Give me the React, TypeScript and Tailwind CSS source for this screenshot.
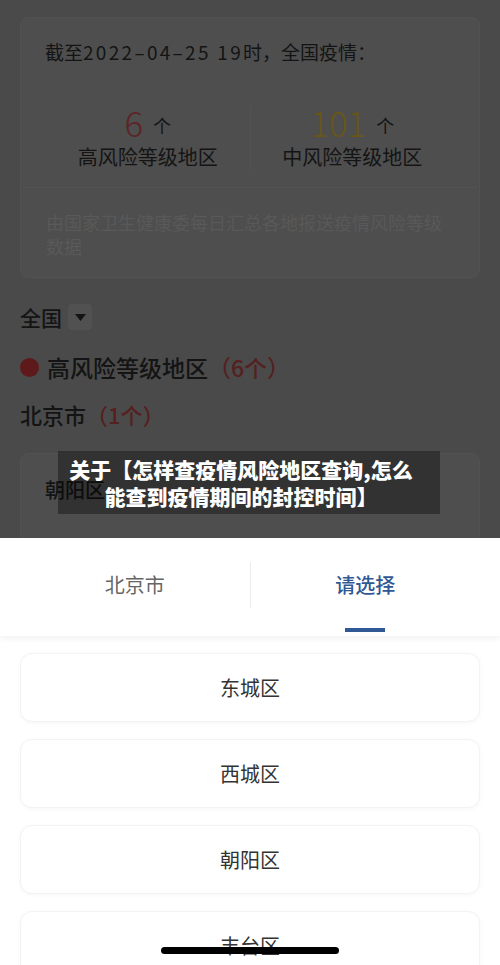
const districts = ["东城区", "西城区", "朝阳区", "丰台区"];

export default function App() {
  return (
    <div
      className="relative h-[965px] w-[500px] overflow-hidden bg-white"
      style={{ fontFamily: '"Noto Sans CJK SC", "Noto Sans", sans-serif' }}
    >
      {/* dimmed page behind the sheet */}
      <div className="relative h-[538px] overflow-hidden bg-[#4a4a4a] px-5 pt-[17px]">
        <div className="h-[261px] rounded-lg border border-[#525252] bg-[#4e4e4e] pt-[21px]">
          <p className="px-[24px] text-[19px] leading-[26px] text-[#141414]">
            截至<span className="tracking-[2.3px]">2022–04–25 19</span>时，全国疫情：
          </p>
          <div className="mt-[41px] flex px-[25px]">
            <div className="flex flex-1 flex-col items-center">
              <div className="flex h-[36px] items-end gap-[10px]">
                <span className="text-[35px] font-light leading-[40px] text-[#5c2424]">6</span>
                <span className="pb-[3px] text-[18px] leading-[28px] text-[#141414]">个</span>
              </div>
              <span className="mt-px text-[20px] leading-[28px] text-[#141414]">高风险等级地区</span>
            </div>
            <div className="w-px bg-[#535353]" />
            <div className="flex flex-1 flex-col items-center">
              <div className="flex h-[36px] items-end gap-[10px]">
                <span className="text-[35px] font-light leading-[40px] text-[#685619]">101</span>
                <span className="pb-[3px] text-[18px] leading-[28px] text-[#141414]">个</span>
              </div>
              <span className="mt-px text-[20px] leading-[28px] text-[#141414]">中风险等级地区</span>
            </div>
          </div>
          <div className="mx-[2px] mt-[16px] border-t border-[#535353]" />
          <p className="mt-[22px] px-[25px] text-[18px] leading-[24px] text-[#595959]">
            由国家卫生健康委每日汇总各地报送疫情风险等级数据
          </p>
        </div>

        <div className="mt-[25px] flex items-center gap-[6px]">
          <span className="text-[21px] font-medium leading-[28px] text-[#141414]">全国</span>
          <span className="flex h-[26px] w-[24px] items-center justify-center rounded-sm bg-[#515151]">
            <svg width="11" height="7" viewBox="0 0 11 7">
              <path d="M0 0h11L5.5 7z" fill="#141414" />
            </svg>
          </span>
        </div>

        <div className="mt-[21px] flex items-center gap-[8px]">
          <span className="h-[19px] w-[19px] rounded-full bg-[#5e1a1a]" />
          <span className="text-[23px] font-medium leading-[30px] text-[#141414]">
            高风险等级地区<span className="text-[#552020]">（6个）</span>
          </span>
        </div>

        <div className="mt-[17px] text-[22px] font-medium leading-[30px] text-[#141414]">
          北京市<span className="text-[#552020]">（1个）</span>
        </div>

        <div className="mt-[24px] h-[120px] rounded-lg border border-[#525252] bg-[#4e4e4e] px-[24px] pt-[22px]">
          <span className="text-[20px] font-medium leading-[28px] text-[#141414]">朝阳区</span>
        </div>

        {/* caption overlay */}
        <div className="absolute left-[58px] top-[451px] flex h-[63px] w-[382px] flex-col items-center justify-center bg-black/[0.35] pr-[16px] text-center">
          <p className="text-[21px] font-black leading-[27px] text-white">关于【怎样查疫情风险地区查询,怎么</p>
          <p className="text-[21px] font-black leading-[27px] text-white">能查到疫情期间的封控时间】</p>
        </div>
      </div>

      {/* bottom sheet */}
      <div className="bg-white">
        <div className="relative flex h-[98px] items-start px-5 shadow-[0_3px_6px_rgba(0,0,0,0.05)]">
          <div className="flex h-[94px] flex-1 items-center justify-center text-[20px] text-[#666666]">北京市</div>
          <div className="mt-[24px] h-[46px] w-px bg-[#ececec]" />
          <div className="flex h-[94px] flex-1 items-center justify-center">
            <span className="text-[20px] font-medium text-[#2f5895]">请选择</span>
          </div>
          <div className="absolute left-[345px] top-[90px] h-[4px] w-[40px] bg-[#2f5895]" />
        </div>

        <div className="flex flex-col gap-[17px] px-5 pt-[17px]">
          {districts.map((name) => (
            <div
              key={name}
              className="flex h-[69px] items-center justify-center rounded-xl border border-[#f3f3f3] bg-white shadow-[0_1px_4px_rgba(0,0,0,0.04)]"
            >
              <span className="text-[20px] text-[#333333]">{name}</span>
            </div>
          ))}
        </div>
      </div>

      {/* home indicator */}
      <div className="absolute left-[161px] top-[947px] h-[7px] w-[178px] rounded-full bg-black" />
    </div>
  );
}
